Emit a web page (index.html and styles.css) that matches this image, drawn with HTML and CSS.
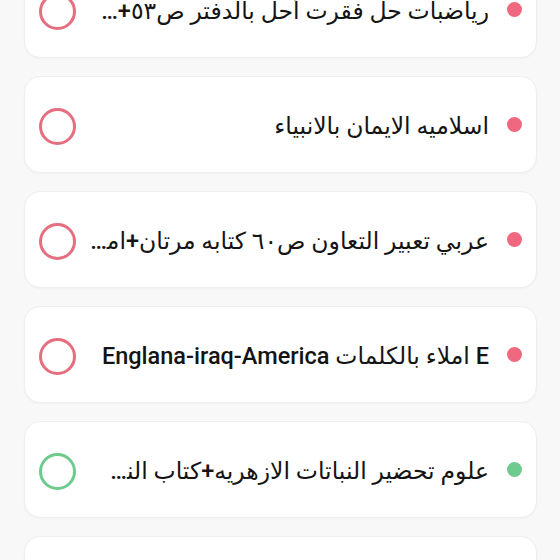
FILE: index.html
```html
<!DOCTYPE html>
<html lang="ar" dir="rtl">
<head>
    <meta charset="UTF-8">
    <meta name="viewport" content="width=device-width, initial-scale=1.0">
    <title>المهام</title>
    <link rel="stylesheet" href="styles.css">
</head>
<body>
    <ul class="task-list">
        <li class="task">
            <span class="dot dot-red"></span>
            <span class="task-title">رياضبات حل فقرت أحل بالدفتر ص٥٣+ح٥٤ بالكتاب</span>
            <span class="check check-red"></span>
        </li>
        <li class="task">
            <span class="dot dot-red"></span>
            <span class="task-title">اسلاميه الايمان بالانبياء</span>
            <span class="check check-red"></span>
        </li>
        <li class="task">
            <span class="dot dot-red"></span>
            <span class="task-title">عربي تعبير التعاون ص٦٠ كتابه مرتان+امتحان</span>
            <span class="check check-red"></span>
        </li>
        <li class="task">
            <span class="dot dot-red"></span>
            <span class="task-title">E املاء بالكلمات Englana-iraq-America</span>
            <span class="check check-red"></span>
        </li>
        <li class="task">
            <span class="dot dot-green"></span>
            <span class="task-title">علوم تحضير النباتات الازهريه+كتاب النشاط</span>
            <span class="check check-green"></span>
        </li>
        <li class="task">
            <span class="dot dot-green"></span>
            <span class="task-title"></span>
            <span class="check check-green"></span>
        </li>
    </ul>
</body>
</html>
```

FILE: styles.css
```css
body {
    margin: 0;
    background: #f8f8f8;
    font-family: Roboto, "DejaVu Sans", sans-serif;
    color: #141414;
    overflow: hidden;
}
.task-list {
    list-style: none;
    margin: -39px 0 0;
    padding: 0 23px 0 24px;
    display: flex;
    flex-direction: column;
    gap: 18px;
}
.task {
    display: flex;
    align-items: center;
    gap: 14px;
    height: 95px;
    padding: 0 14px;
    background: #fff;
    border: 1px solid #eeeeee;
    border-radius: 16px;
    box-shadow: 0 1px 2px rgba(0,0,0,0.03);
}
.dot {
    flex: none;
    width: 15px;
    height: 15px;
    border-radius: 50%;
    margin-inline-end: 4px;
}
.dot-red { background: #f0687f; }
.dot-green { background: #6fcb8d; }
.task-title {
    flex: 1;
    min-width: 0;
    font-size: 23.5px;
    font-weight: 500;
    white-space: nowrap;
    overflow: hidden;
    text-overflow: ellipsis;
    margin-top: 2px;
}
.check {
    flex: none;
    width: 31px;
    height: 31px;
    border: 3px solid #e56e81;
    border-radius: 50%;
    margin-top: 3px;
}
.check-green { border-color: #6fcb8d; }
```
